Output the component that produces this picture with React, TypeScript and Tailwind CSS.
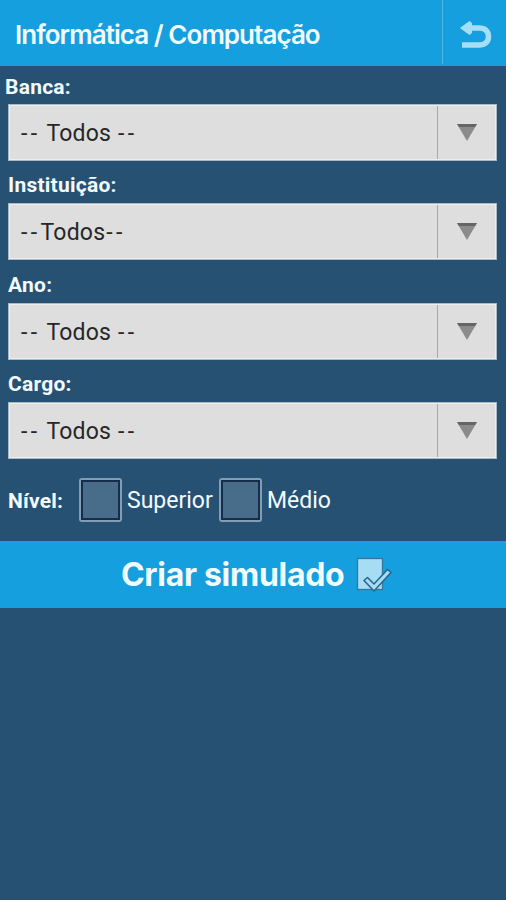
import React from 'react';
import clsx from 'clsx';

const filters = [
  { id: 'banca', label: 'Banca:', value: '-- Todos --', row: 'h-[38px] pl-[5px] pt-[9px]' },
  { id: 'instituicao', label: 'Instituição:', value: '--Todos--', row: 'h-[42px] pl-[8px] pt-[12px]' },
  { id: 'ano', label: 'Ano:', value: '-- Todos --', row: 'h-[43px] pl-[8px] pt-[13px]' },
  { id: 'cargo', label: 'Cargo:', value: '-- Todos --', row: 'h-[42px] pl-[8px] pt-[12px]' },
];

function BackIcon() {
  return (
    <svg width="32" height="30" viewBox="0 0 32 30" fill="none">
      <path d="M11 8 H19 C25 8 28.500 11 28.500 16.500 C28.500 22 25 25 19 25 H2" stroke="#a5def7" strokeWidth="5.500" />
      <path d="M0.500 8 L9.500 1.500 L11.500 3 V13 L9.500 14.500 Z" fill="#a5def7" stroke="#a5def7" strokeLinejoin="round" />
    </svg>
  );
}

function SimuladoIcon() {
  return (
    <svg width="36" height="36" viewBox="0 0 36 36" fill="none">
      <rect x="1.500" y="1.500" width="25" height="31" fill="#a6dcf4" stroke="#397696" strokeWidth="1.300" />
      <path d="M8 23.500 L11.500 20.500 L18 27 L31.500 12.500 L35 15.500 L18 34 Z" fill="#a6dcf4" stroke="#28658a" strokeWidth="1.500" strokeLinejoin="round" />
    </svg>
  );
}

function Dropdown({ value }: { value: string }) {
  return (
    <button className="ml-[8px] flex h-[57px] w-[489px] border-2 border-[#eeeeee] bg-[#dedede] text-left text-[#272727] outline outline-1 -outline-offset-1 outline-[#a9b9c4]">
      <span className="flex h-full flex-1 items-center whitespace-pre pl-[11px] pt-[3px] text-[23px]">
        {value.split(/(Todos)/).map((part, i) => (
          <span key={i} className={part === 'Todos' ? 'pr-[1px] tracking-[0.2px]' : 'tracking-[3.4px] [word-spacing:-3.2px]'}>{part}</span>
        ))}
      </span>
      <span className="flex h-full w-[58px] items-center justify-center border-l border-[#a8a8a8]">
        <svg width="20" height="18" viewBox="0 0 20 18">
          <path d="M0 0 H20 L10 17 Z" fill="#8b8b8b" />
          <path d="M0 0 H20 L18 3 H2 Z" fill="#656565" />
        </svg>
      </span>
    </button>
  );
}

function Checkbox() {
  return (
    <span className="block h-[44px] w-[43px] rounded-[3px] border-2 border-[#829eb4] bg-[#486d8b]">
      <span className="block h-full w-full border-2 border-[#152e4b]" />
    </span>
  );
}

export default function App() {
  return (
    <div className="h-[900px] w-[506px] overflow-hidden bg-[#265173] font-['Roboto',sans-serif] text-[#f2fbff]">
      <header className="flex h-[66px] bg-[#159fdf]">
        <h1 className="flex flex-1 items-center whitespace-nowrap pl-[15px] pt-[3px] font-['Inter',sans-serif] text-[26px] font-semibold tracking-[-0.95px]">
          Informática / Computação
        </h1>
        <button className="mb-[2px] flex w-[64px] items-center justify-center border-l border-[#4db9ea] pl-[3px] pt-[5px]">
          <BackIcon />
        </button>
      </header>

      {filters.map((filter) => (
        <div key={filter.id}>
          <div className={clsx('text-[21px] font-bold leading-[25px] tracking-[0.25px]', filter.row)}>
            <span>{filter.label}</span>
          </div>
          <Dropdown value={filter.value} />
        </div>
      ))}

      <div className="flex h-[82px] items-center pl-[8px] text-[23px]">
        <span className="w-[71px] pt-[4px] text-[21px] font-bold tracking-[0.2px]">Nível:</span>
        <Checkbox />
        <span className="w-[97px] pl-[5px] pt-[3px]">Superior</span>
        <Checkbox />
        <span className="pl-[5px] pt-[3px]">Médio</span>
      </div>

      <button className="flex h-[67px] w-full items-center bg-[#159fdf] pl-[121px]">
        <span className="w-[235px] whitespace-nowrap text-left font-['Inter',sans-serif] text-[32px] font-bold tracking-[-0.3px]">
          Criar simulado
        </span>
        <SimuladoIcon />
      </button>
    </div>
  );
}
